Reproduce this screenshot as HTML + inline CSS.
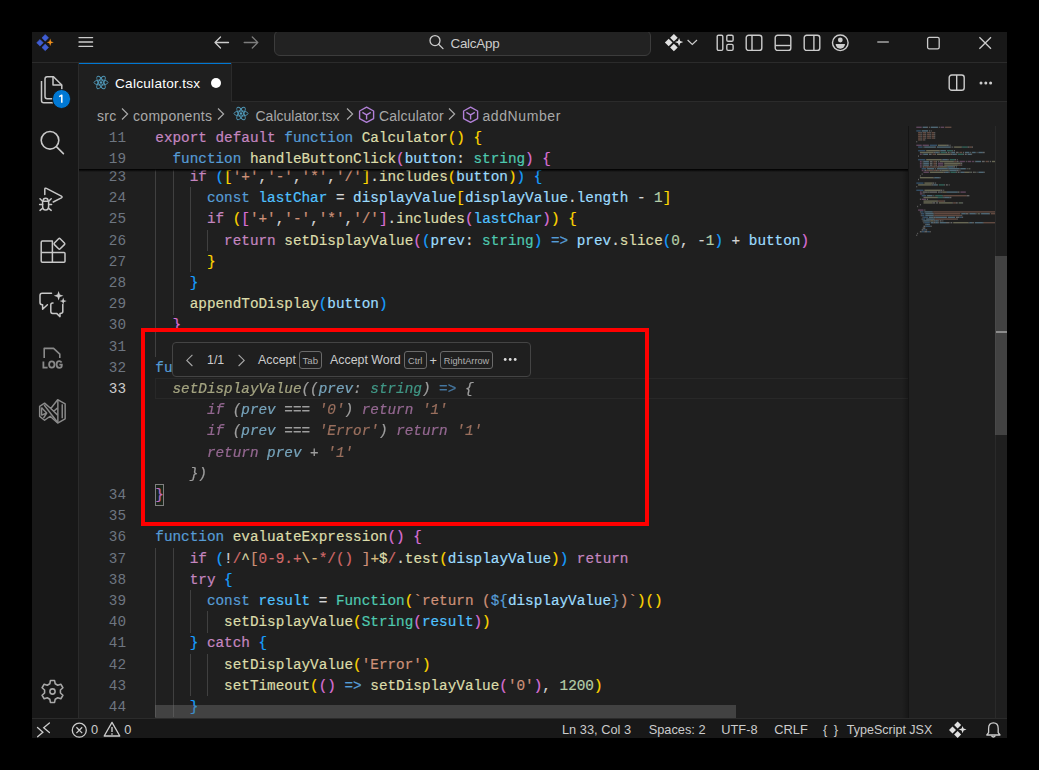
<!DOCTYPE html>
<html><head><meta charset="utf-8">
<style>
*{box-sizing:border-box;margin:0;padding:0}
html,body{width:1039px;height:770px;overflow:hidden;background:#000}
body{position:relative;font-family:"Liberation Sans",sans-serif;color:#cccccc}
.abs{position:absolute}
#title{position:absolute;left:32px;top:32px;width:975px;height:30px;background:#181818}
#titleb{position:absolute;left:32px;top:62px;width:975px;height:1px;background:#2b2b2b}
#act{position:absolute;left:32px;top:63px;width:46px;height:655px;background:#181818}
#actb{position:absolute;left:78px;top:63px;width:1px;height:655px;background:#2b2b2b}
#tabs{position:absolute;left:79px;top:63px;width:928px;height:38px;background:#181818}
#tabsb{position:absolute;left:79px;top:101px;width:928px;height:1px;background:#2b2b2b}
#tab{position:absolute;left:79px;top:63px;width:152px;height:39px;background:#1f1f1f;border-top:1px solid #0078d4}
#tabr{position:absolute;left:231px;top:63px;width:1px;height:38px;background:#2b2b2b}
#editor{position:absolute;left:79px;top:102px;width:928px;height:616px;background:#1f1f1f}
#status{position:absolute;left:32px;top:718px;width:975px;height:20px;background:#181818;border-top:1px solid #2b2b2b}
.ln{position:absolute;height:21.2px;line-height:21.2px;font-family:"Liberation Mono",monospace;font-size:14.33px;white-space:pre;-webkit-text-stroke:0.2px}
.ghost{font-style:italic;opacity:0.7}
.num{position:absolute;left:90px;width:36px;text-align:right;height:21.2px;line-height:21.2px;font-family:"Liberation Mono",monospace;font-size:14.33px;color:#6e7681;white-space:pre}
.num.act{color:#cccccc}
.guide{position:absolute;width:1px;height:21.2px;background:#404040}
.ui{position:absolute;white-space:pre;font-family:"Liberation Sans",sans-serif}
svg{position:absolute;overflow:visible}
</style></head><body>
<div id="title"></div>
<div id="titleb"></div>
<div id="act"></div>
<div id="actb"></div>
<div id="tabs"></div>
<div id="tabsb"></div>
<div id="editor"></div>
<div id="tab"></div>
<div id="tabr"></div>

<!-- title bar contents -->
<div class="abs" style="left:274px;top:32px;width:377px;height:25px;overflow:hidden"><div class="abs" style="left:0;top:-2.5px;width:377px;height:26.5px;border:1px solid #3c3c3c;border-radius:6px;background:#222222"></div></div>
<div class="ui" style="left:450.5px;top:34.8px;font-size:13.4px;line-height:17px;letter-spacing:-0.25px;color:#cccccc">CalcApp</div>

<!-- tab contents -->
<div class="ui" style="left:115px;top:74.7px;font-size:13.6px;line-height:17px;letter-spacing:0.27px;color:#ffffff">Calculator.tsx</div>
<div class="abs" style="left:210.5px;top:78px;width:10px;height:10px;border-radius:50%;background:#ffffff"></div>

<!-- breadcrumbs -->
<div class="ui" style="left:97px;top:108.1px;font-size:14px;line-height:17px;letter-spacing:0.3px;color:#a9a9a9">src</div>
<div class="ui" style="left:133px;top:108.1px;font-size:14px;line-height:17px;letter-spacing:0.3px;color:#a9a9a9">components</div>
<div class="ui" style="left:255.5px;top:108.1px;font-size:14px;line-height:17px;letter-spacing:0px;color:#a9a9a9">Calculator.tsx</div>
<div class="ui" style="left:379px;top:108.1px;font-size:14px;line-height:17px;letter-spacing:0.17px;color:#a9a9a9">Calculator</div>
<div class="ui" style="left:482.4px;top:108.1px;font-size:14px;line-height:17px;letter-spacing:0.6px;color:#a9a9a9">addNumber</div>

<!-- editor -->
<div class="guide" style="top:166.20px;left:155.30px"></div>
<div class="guide" style="top:166.20px;left:172.50px"></div>
<div class="guide" style="top:187.40px;left:155.30px"></div>
<div class="guide" style="top:187.40px;left:172.50px"></div>
<div class="guide" style="top:187.40px;left:189.70px"></div>
<div class="guide" style="top:208.60px;left:155.30px"></div>
<div class="guide" style="top:208.60px;left:172.50px"></div>
<div class="guide" style="top:208.60px;left:189.70px"></div>
<div class="guide" style="top:229.80px;left:155.30px"></div>
<div class="guide" style="top:229.80px;left:172.50px"></div>
<div class="guide" style="top:229.80px;left:189.70px"></div>
<div class="guide" style="top:229.80px;left:206.90px"></div>
<div class="guide" style="top:251.00px;left:155.30px"></div>
<div class="guide" style="top:251.00px;left:172.50px"></div>
<div class="guide" style="top:251.00px;left:189.70px"></div>
<div class="guide" style="top:272.20px;left:155.30px"></div>
<div class="guide" style="top:272.20px;left:172.50px"></div>
<div class="guide" style="top:293.40px;left:155.30px"></div>
<div class="guide" style="top:293.40px;left:172.50px"></div>
<div class="guide" style="top:314.60px;left:155.30px"></div>
<div class="guide" style="top:335.80px;left:155.30px"></div>
<div class="guide" style="top:547.80px;left:155.30px"></div>
<div class="guide" style="top:547.80px;left:172.50px"></div>
<div class="guide" style="top:569.00px;left:155.30px"></div>
<div class="guide" style="top:569.00px;left:172.50px"></div>
<div class="guide" style="top:590.20px;left:155.30px"></div>
<div class="guide" style="top:590.20px;left:172.50px"></div>
<div class="guide" style="top:590.20px;left:189.70px"></div>
<div class="guide" style="top:611.40px;left:155.30px"></div>
<div class="guide" style="top:611.40px;left:172.50px"></div>
<div class="guide" style="top:611.40px;left:189.70px"></div>
<div class="guide" style="top:611.40px;left:206.90px"></div>
<div class="guide" style="top:632.60px;left:155.30px"></div>
<div class="guide" style="top:632.60px;left:172.50px"></div>
<div class="guide" style="top:653.80px;left:155.30px"></div>
<div class="guide" style="top:653.80px;left:172.50px"></div>
<div class="guide" style="top:653.80px;left:189.70px"></div>
<div class="guide" style="top:653.80px;left:206.90px"></div>
<div class="guide" style="top:675.00px;left:155.30px"></div>
<div class="guide" style="top:675.00px;left:172.50px"></div>
<div class="guide" style="top:675.00px;left:189.70px"></div>
<div class="guide" style="top:675.00px;left:206.90px"></div>
<div class="guide" style="top:696.20px;left:155.30px"></div>
<div class="guide" style="top:696.20px;left:172.50px"></div>
<div class="num" style="top:166.90px">23</div>
<div class="num" style="top:188.10px">24</div>
<div class="num" style="top:209.30px">25</div>
<div class="num" style="top:230.50px">26</div>
<div class="num" style="top:251.70px">27</div>
<div class="num" style="top:272.90px">28</div>
<div class="num" style="top:294.10px">29</div>
<div class="num" style="top:315.30px">30</div>
<div class="num" style="top:336.50px">31</div>
<div class="num" style="top:357.70px">32</div>
<div class="num act" style="top:378.90px">33</div>
<div class="num" style="top:484.90px">34</div>
<div class="num" style="top:506.10px">35</div>
<div class="num" style="top:527.30px">36</div>
<div class="num" style="top:548.50px">37</div>
<div class="num" style="top:569.70px">38</div>
<div class="num" style="top:590.90px">39</div>
<div class="num" style="top:612.10px">40</div>
<div class="num" style="top:633.30px">41</div>
<div class="num" style="top:654.50px">42</div>
<div class="num" style="top:675.70px">43</div>
<div class="num" style="top:696.90px">44</div>
<div class="ln" style="top:166.90px;left:189.70px"><span style="color:#c586c0">if</span><span style="color:#d4d4d4"> </span><span style="color:#179fff">(</span><span style="color:#ffd700">[</span><span style="color:#ce9178">&#x27;+&#x27;</span><span style="color:#d4d4d4">,</span><span style="color:#ce9178">&#x27;-&#x27;</span><span style="color:#d4d4d4">,</span><span style="color:#ce9178">&#x27;*&#x27;</span><span style="color:#d4d4d4">,</span><span style="color:#ce9178">&#x27;/&#x27;</span><span style="color:#ffd700">]</span><span style="color:#d4d4d4">.</span><span style="color:#dcdcaa">includes</span><span style="color:#ffd700">(</span><span style="color:#9cdcfe">button</span><span style="color:#ffd700">)</span><span style="color:#179fff">)</span><span style="color:#d4d4d4"> </span><span style="color:#179fff">{</span></div>
<div class="ln" style="top:188.10px;left:206.90px"><span style="color:#569cd6">const</span><span style="color:#d4d4d4"> </span><span style="color:#4fc1ff">lastChar</span><span style="color:#d4d4d4"> = </span><span style="color:#9cdcfe">displayValue</span><span style="color:#ffd700">[</span><span style="color:#9cdcfe">displayValue</span><span style="color:#d4d4d4">.</span><span style="color:#9cdcfe">length</span><span style="color:#d4d4d4"> - </span><span style="color:#b5cea8">1</span><span style="color:#ffd700">]</span></div>
<div class="ln" style="top:209.30px;left:206.90px"><span style="color:#c586c0">if</span><span style="color:#d4d4d4"> </span><span style="color:#ffd700">(</span><span style="color:#da70d6">[</span><span style="color:#ce9178">&#x27;+&#x27;</span><span style="color:#d4d4d4">,</span><span style="color:#ce9178">&#x27;-&#x27;</span><span style="color:#d4d4d4">,</span><span style="color:#ce9178">&#x27;*&#x27;</span><span style="color:#d4d4d4">,</span><span style="color:#ce9178">&#x27;/&#x27;</span><span style="color:#da70d6">]</span><span style="color:#d4d4d4">.</span><span style="color:#dcdcaa">includes</span><span style="color:#da70d6">(</span><span style="color:#4fc1ff">lastChar</span><span style="color:#da70d6">)</span><span style="color:#ffd700">)</span><span style="color:#d4d4d4"> </span><span style="color:#ffd700">{</span></div>
<div class="ln" style="top:230.50px;left:224.10px"><span style="color:#c586c0">return</span><span style="color:#d4d4d4"> </span><span style="color:#dcdcaa">setDisplayValue</span><span style="color:#da70d6">(</span><span style="color:#179fff">(</span><span style="color:#9cdcfe">prev</span><span style="color:#d4d4d4">: </span><span style="color:#4ec9b0">string</span><span style="color:#179fff">)</span><span style="color:#d4d4d4"> </span><span style="color:#569cd6">=&gt;</span><span style="color:#d4d4d4"> </span><span style="color:#9cdcfe">prev</span><span style="color:#d4d4d4">.</span><span style="color:#dcdcaa">slice</span><span style="color:#179fff">(</span><span style="color:#b5cea8">0</span><span style="color:#d4d4d4">, </span><span style="color:#d4d4d4">-</span><span style="color:#b5cea8">1</span><span style="color:#179fff">)</span><span style="color:#d4d4d4"> + </span><span style="color:#9cdcfe">button</span><span style="color:#da70d6">)</span></div>
<div class="ln" style="top:251.70px;left:206.90px"><span style="color:#ffd700">}</span></div>
<div class="ln" style="top:272.90px;left:189.70px"><span style="color:#179fff">}</span></div>
<div class="ln" style="top:294.10px;left:189.70px"><span style="color:#dcdcaa">appendToDisplay</span><span style="color:#179fff">(</span><span style="color:#9cdcfe">button</span><span style="color:#179fff">)</span></div>
<div class="ln" style="top:315.30px;left:172.50px"><span style="color:#da70d6">}</span></div>
<div class="ln" style="top:357.70px;left:155.30px"><span style="color:#569cd6">function addNumber</span></div>
<div class="ln" style="top:484.90px;left:155.30px"><span style="color:#da70d6">}</span></div>
<div class="ln" style="top:527.30px;left:155.30px"><span style="color:#569cd6">function</span><span style="color:#d4d4d4"> </span><span style="color:#dcdcaa">evaluateExpression</span><span style="color:#da70d6">(</span><span style="color:#da70d6">)</span><span style="color:#d4d4d4"> </span><span style="color:#da70d6">{</span></div>
<div class="ln" style="top:548.50px;left:189.70px"><span style="color:#c586c0">if</span><span style="color:#d4d4d4"> </span><span style="color:#179fff">(</span><span style="color:#d4d4d4">!</span><span style="color:#d16969">/</span><span style="color:#dcdcaa">^</span><span style="color:#ce9178">[</span><span style="color:#d16969">0-9.+</span><span style="color:#d7ba7d">\-</span><span style="color:#d16969">*/()</span><span style="color:#d16969"> </span><span style="color:#ce9178">]</span><span style="color:#d7ba7d">+</span><span style="color:#dcdcaa">$</span><span style="color:#d16969">/</span><span style="color:#d4d4d4">.</span><span style="color:#dcdcaa">test</span><span style="color:#ffd700">(</span><span style="color:#9cdcfe">displayValue</span><span style="color:#ffd700">)</span><span style="color:#179fff">)</span><span style="color:#d4d4d4"> </span><span style="color:#c586c0">return</span></div>
<div class="ln" style="top:569.70px;left:189.70px"><span style="color:#c586c0">try</span><span style="color:#d4d4d4"> </span><span style="color:#179fff">{</span></div>
<div class="ln" style="top:590.90px;left:206.90px"><span style="color:#569cd6">const</span><span style="color:#d4d4d4"> </span><span style="color:#4fc1ff">result</span><span style="color:#d4d4d4"> = </span><span style="color:#4ec9b0">Function</span><span style="color:#ffd700">(</span><span style="color:#ce9178">`return (</span><span style="color:#569cd6">${</span><span style="color:#9cdcfe">displayValue</span><span style="color:#569cd6">}</span><span style="color:#ce9178">)`</span><span style="color:#ffd700">)</span><span style="color:#ffd700">(</span><span style="color:#ffd700">)</span></div>
<div class="ln" style="top:612.10px;left:224.10px"><span style="color:#dcdcaa">setDisplayValue</span><span style="color:#ffd700">(</span><span style="color:#4ec9b0">String</span><span style="color:#da70d6">(</span><span style="color:#4fc1ff">result</span><span style="color:#da70d6">)</span><span style="color:#ffd700">)</span></div>
<div class="ln" style="top:633.30px;left:189.70px"><span style="color:#179fff">}</span><span style="color:#d4d4d4"> </span><span style="color:#c586c0">catch</span><span style="color:#d4d4d4"> </span><span style="color:#179fff">{</span></div>
<div class="ln" style="top:654.50px;left:224.10px"><span style="color:#dcdcaa">setDisplayValue</span><span style="color:#ffd700">(</span><span style="color:#ce9178">&#x27;Error&#x27;</span><span style="color:#ffd700">)</span></div>
<div class="ln" style="top:675.70px;left:224.10px"><span style="color:#dcdcaa">setTimeout</span><span style="color:#ffd700">(</span><span style="color:#da70d6">(</span><span style="color:#da70d6">)</span><span style="color:#d4d4d4"> </span><span style="color:#569cd6">=&gt;</span><span style="color:#d4d4d4"> </span><span style="color:#dcdcaa">setDisplayValue</span><span style="color:#da70d6">(</span><span style="color:#ce9178">&#x27;0&#x27;</span><span style="color:#da70d6">)</span><span style="color:#d4d4d4">, </span><span style="color:#b5cea8">1200</span><span style="color:#ffd700">)</span></div>
<div class="ln" style="top:696.90px;left:189.70px"><span style="color:#179fff">}</span></div>
<div class="ln ghost" style="top:378.90px;left:172.50px"><span style="color:#dcdcaa">setDisplayValue</span><span style="color:#d4d4d4">((</span><span style="color:#9cdcfe">prev</span><span style="color:#d4d4d4">: </span><span style="color:#4ec9b0">string</span><span style="color:#d4d4d4">)</span><span style="color:#d4d4d4"> </span><span style="color:#569cd6">=&gt;</span><span style="color:#d4d4d4"> </span><span style="color:#d4d4d4">{</span></div>
<div class="ln ghost" style="top:400.10px;left:206.90px"><span style="color:#c586c0">if</span><span style="color:#d4d4d4"> (</span><span style="color:#9cdcfe">prev</span><span style="color:#d4d4d4"> === </span><span style="color:#ce9178">&#x27;0&#x27;</span><span style="color:#d4d4d4">)</span><span style="color:#d4d4d4"> </span><span style="color:#c586c0">return</span><span style="color:#d4d4d4"> </span><span style="color:#ce9178">&#x27;1&#x27;</span></div>
<div class="ln ghost" style="top:421.30px;left:206.90px"><span style="color:#c586c0">if</span><span style="color:#d4d4d4"> (</span><span style="color:#9cdcfe">prev</span><span style="color:#d4d4d4"> === </span><span style="color:#ce9178">&#x27;Error&#x27;</span><span style="color:#d4d4d4">)</span><span style="color:#d4d4d4"> </span><span style="color:#c586c0">return</span><span style="color:#d4d4d4"> </span><span style="color:#ce9178">&#x27;1&#x27;</span></div>
<div class="ln ghost" style="top:442.50px;left:206.90px"><span style="color:#c586c0">return</span><span style="color:#d4d4d4"> </span><span style="color:#9cdcfe">prev</span><span style="color:#d4d4d4"> + </span><span style="color:#ce9178">&#x27;1&#x27;</span></div>
<div class="ln ghost" style="top:463.70px;left:189.70px"><span style="color:#d4d4d4">})</span></div>


<!-- current line border (line 33) -->
<div class="abs" style="left:155px;top:378.20px;width:753px;height:21.2px;border:1px solid #282828;border-right:none"></div>
<!-- bracket match box line 34 -->
<div class="abs" style="left:155.2px;top:484.20px;width:8.9px;height:21.4px;border:1px solid #808080;background:rgba(0,100,0,0.1)"></div>
<svg style="left:900px;top:120px;opacity:0.38;filter:blur(0.3px)" width="100" height="130" viewBox="0 0 100 130"><rect x="16.30" y="6.60" width="5.40" height="1.4" fill="#c586c0"/><rect x="22.60" y="6.60" width="4.50" height="1.4" fill="#9cdcfe"/><rect x="27.10" y="6.60" width="0.90" height="1.4" fill="#d4d4d4"/><rect x="28.90" y="6.60" width="0.90" height="1.4" fill="#d4d4d4"/><rect x="30.70" y="6.60" width="7.20" height="1.4" fill="#9cdcfe"/><rect x="38.80" y="6.60" width="0.90" height="1.4" fill="#d4d4d4"/><rect x="40.60" y="6.60" width="3.60" height="1.4" fill="#c586c0"/><rect x="45.10" y="6.60" width="6.30" height="1.4" fill="#ce9178"/><rect x="16.30" y="10.20" width="4.50" height="1.4" fill="#569cd6"/><rect x="21.70" y="10.20" width="6.30" height="1.4" fill="#9cdcfe"/><rect x="28.90" y="10.20" width="0.90" height="1.4" fill="#d4d4d4"/><rect x="30.70" y="10.20" width="0.90" height="1.4" fill="#d4d4d4"/><rect x="18.10" y="12.00" width="2.70" height="1.4" fill="#ce9178"/><rect x="20.80" y="12.00" width="0.90" height="1.4" fill="#d4d4d4"/><rect x="22.60" y="12.00" width="2.70" height="1.4" fill="#ce9178"/><rect x="25.30" y="12.00" width="0.90" height="1.4" fill="#d4d4d4"/><rect x="27.10" y="12.00" width="2.70" height="1.4" fill="#ce9178"/><rect x="29.80" y="12.00" width="0.90" height="1.4" fill="#d4d4d4"/><rect x="31.60" y="12.00" width="2.70" height="1.4" fill="#ce9178"/><rect x="34.30" y="12.00" width="0.90" height="1.4" fill="#d4d4d4"/><rect x="18.10" y="13.80" width="2.70" height="1.4" fill="#ce9178"/><rect x="20.80" y="13.80" width="0.90" height="1.4" fill="#d4d4d4"/><rect x="22.60" y="13.80" width="2.70" height="1.4" fill="#ce9178"/><rect x="25.30" y="13.80" width="0.90" height="1.4" fill="#d4d4d4"/><rect x="27.10" y="13.80" width="2.70" height="1.4" fill="#ce9178"/><rect x="29.80" y="13.80" width="0.90" height="1.4" fill="#d4d4d4"/><rect x="31.60" y="13.80" width="2.70" height="1.4" fill="#ce9178"/><rect x="34.30" y="13.80" width="0.90" height="1.4" fill="#d4d4d4"/><rect x="18.10" y="15.60" width="2.70" height="1.4" fill="#ce9178"/><rect x="20.80" y="15.60" width="0.90" height="1.4" fill="#d4d4d4"/><rect x="22.60" y="15.60" width="2.70" height="1.4" fill="#ce9178"/><rect x="25.30" y="15.60" width="0.90" height="1.4" fill="#d4d4d4"/><rect x="27.10" y="15.60" width="2.70" height="1.4" fill="#ce9178"/><rect x="29.80" y="15.60" width="0.90" height="1.4" fill="#d4d4d4"/><rect x="31.60" y="15.60" width="2.70" height="1.4" fill="#ce9178"/><rect x="34.30" y="15.60" width="0.90" height="1.4" fill="#d4d4d4"/><rect x="18.10" y="17.40" width="2.70" height="1.4" fill="#ce9178"/><rect x="20.80" y="17.40" width="0.90" height="1.4" fill="#d4d4d4"/><rect x="22.60" y="17.40" width="2.70" height="1.4" fill="#ce9178"/><rect x="25.30" y="17.40" width="0.90" height="1.4" fill="#d4d4d4"/><rect x="27.10" y="17.40" width="2.70" height="1.4" fill="#ce9178"/><rect x="29.80" y="17.40" width="0.90" height="1.4" fill="#d4d4d4"/><rect x="31.60" y="17.40" width="2.70" height="1.4" fill="#ce9178"/><rect x="34.30" y="17.40" width="0.90" height="1.4" fill="#d4d4d4"/><rect x="18.10" y="19.20" width="2.70" height="1.4" fill="#ce9178"/><rect x="20.80" y="19.20" width="0.90" height="1.4" fill="#d4d4d4"/><rect x="22.60" y="19.20" width="1.80" height="1.4" fill="#ce9178"/><rect x="24.40" y="19.20" width="0.90" height="1.4" fill="#d4d4d4"/><rect x="16.30" y="21.00" width="0.90" height="1.4" fill="#d4d4d4"/><rect x="16.30" y="24.60" width="5.40" height="1.4" fill="#c586c0"/><rect x="22.60" y="24.60" width="6.30" height="1.4" fill="#c586c0"/><rect x="29.80" y="24.60" width="7.20" height="1.4" fill="#569cd6"/><rect x="37.90" y="24.60" width="9.00" height="1.4" fill="#dcdcaa"/><rect x="46.90" y="24.60" width="1.80" height="1.4" fill="#d4d4d4"/><rect x="49.60" y="24.60" width="0.90" height="1.4" fill="#d4d4d4"/><rect x="18.10" y="26.40" width="4.50" height="1.4" fill="#569cd6"/><rect x="23.50" y="26.40" width="0.90" height="1.4" fill="#d4d4d4"/><rect x="24.40" y="26.40" width="10.80" height="1.4" fill="#9cdcfe"/><rect x="35.20" y="26.40" width="0.90" height="1.4" fill="#d4d4d4"/><rect x="37.00" y="26.40" width="13.50" height="1.4" fill="#9cdcfe"/><rect x="50.50" y="26.40" width="0.90" height="1.4" fill="#d4d4d4"/><rect x="52.30" y="26.40" width="0.90" height="1.4" fill="#d4d4d4"/><rect x="54.10" y="26.40" width="7.20" height="1.4" fill="#dcdcaa"/><rect x="61.30" y="26.40" width="0.90" height="1.4" fill="#d4d4d4"/><rect x="62.20" y="26.40" width="5.40" height="1.4" fill="#4ec9b0"/><rect x="67.60" y="26.40" width="1.80" height="1.4" fill="#d4d4d4"/><rect x="69.40" y="26.40" width="2.70" height="1.4" fill="#ce9178"/><rect x="72.10" y="26.40" width="0.90" height="1.4" fill="#d4d4d4"/><rect x="18.10" y="30.00" width="7.20" height="1.4" fill="#569cd6"/><rect x="26.20" y="30.00" width="13.50" height="1.4" fill="#dcdcaa"/><rect x="39.70" y="30.00" width="0.90" height="1.4" fill="#d4d4d4"/><rect x="40.60" y="30.00" width="4.50" height="1.4" fill="#9cdcfe"/><rect x="45.10" y="30.00" width="0.90" height="1.4" fill="#d4d4d4"/><rect x="46.90" y="30.00" width="5.40" height="1.4" fill="#4ec9b0"/><rect x="52.30" y="30.00" width="0.90" height="1.4" fill="#d4d4d4"/><rect x="54.10" y="30.00" width="0.90" height="1.4" fill="#d4d4d4"/><rect x="19.90" y="31.80" width="13.50" height="1.4" fill="#dcdcaa"/><rect x="33.40" y="31.80" width="1.80" height="1.4" fill="#d4d4d4"/><rect x="35.20" y="31.80" width="3.60" height="1.4" fill="#9cdcfe"/><rect x="38.80" y="31.80" width="0.90" height="1.4" fill="#d4d4d4"/><rect x="40.60" y="31.80" width="5.40" height="1.4" fill="#4ec9b0"/><rect x="46.00" y="31.80" width="0.90" height="1.4" fill="#d4d4d4"/><rect x="47.80" y="31.80" width="1.80" height="1.4" fill="#d4d4d4"/><rect x="50.50" y="31.80" width="0.90" height="1.4" fill="#d4d4d4"/><rect x="51.40" y="31.80" width="3.60" height="1.4" fill="#9cdcfe"/><rect x="55.90" y="31.80" width="2.70" height="1.4" fill="#d4d4d4"/><rect x="59.50" y="31.80" width="2.70" height="1.4" fill="#ce9178"/><rect x="63.10" y="31.80" width="0.90" height="1.4" fill="#d4d4d4"/><rect x="64.90" y="31.80" width="4.50" height="1.4" fill="#9cdcfe"/><rect x="70.30" y="31.80" width="0.90" height="1.4" fill="#d4d4d4"/><rect x="72.10" y="31.80" width="3.60" height="1.4" fill="#9cdcfe"/><rect x="76.60" y="31.80" width="0.90" height="1.4" fill="#d4d4d4"/><rect x="78.40" y="31.80" width="4.50" height="1.4" fill="#9cdcfe"/><rect x="82.90" y="31.80" width="1.80" height="1.4" fill="#d4d4d4"/><rect x="19.90" y="33.60" width="1.80" height="1.4" fill="#c586c0"/><rect x="22.60" y="33.60" width="0.90" height="1.4" fill="#d4d4d4"/><rect x="23.50" y="33.60" width="4.50" height="1.4" fill="#9cdcfe"/><rect x="28.90" y="33.60" width="2.70" height="1.4" fill="#d4d4d4"/><rect x="32.50" y="33.60" width="2.70" height="1.4" fill="#ce9178"/><rect x="35.20" y="33.60" width="0.90" height="1.4" fill="#d4d4d4"/><rect x="37.00" y="33.60" width="13.50" height="1.4" fill="#dcdcaa"/><rect x="50.50" y="33.60" width="1.80" height="1.4" fill="#d4d4d4"/><rect x="52.30" y="33.60" width="3.60" height="1.4" fill="#9cdcfe"/><rect x="55.90" y="33.60" width="0.90" height="1.4" fill="#d4d4d4"/><rect x="57.70" y="33.60" width="5.40" height="1.4" fill="#4ec9b0"/><rect x="63.10" y="33.60" width="0.90" height="1.4" fill="#d4d4d4"/><rect x="64.90" y="33.60" width="1.80" height="1.4" fill="#d4d4d4"/><rect x="67.60" y="33.60" width="3.60" height="1.4" fill="#9cdcfe"/><rect x="71.20" y="33.60" width="0.90" height="1.4" fill="#d4d4d4"/><rect x="18.10" y="35.40" width="0.90" height="1.4" fill="#d4d4d4"/><rect x="18.10" y="39.00" width="7.20" height="1.4" fill="#569cd6"/><rect x="26.20" y="39.00" width="15.30" height="1.4" fill="#dcdcaa"/><rect x="41.50" y="39.00" width="0.90" height="1.4" fill="#d4d4d4"/><rect x="42.40" y="39.00" width="5.40" height="1.4" fill="#9cdcfe"/><rect x="47.80" y="39.00" width="0.90" height="1.4" fill="#d4d4d4"/><rect x="49.60" y="39.00" width="5.40" height="1.4" fill="#4ec9b0"/><rect x="55.00" y="39.00" width="0.90" height="1.4" fill="#d4d4d4"/><rect x="56.80" y="39.00" width="0.90" height="1.4" fill="#d4d4d4"/><rect x="19.90" y="40.80" width="1.80" height="1.4" fill="#c586c0"/><rect x="22.60" y="40.80" width="0.90" height="1.4" fill="#d4d4d4"/><rect x="23.50" y="40.80" width="5.40" height="1.4" fill="#9cdcfe"/><rect x="29.80" y="40.80" width="2.70" height="1.4" fill="#d4d4d4"/><rect x="33.40" y="40.80" width="2.70" height="1.4" fill="#ce9178"/><rect x="36.10" y="40.80" width="0.90" height="1.4" fill="#d4d4d4"/><rect x="37.90" y="40.80" width="0.90" height="1.4" fill="#d4d4d4"/><rect x="39.70" y="40.80" width="13.50" height="1.4" fill="#dcdcaa"/><rect x="53.20" y="40.80" width="0.90" height="1.4" fill="#d4d4d4"/><rect x="54.10" y="40.80" width="2.70" height="1.4" fill="#ce9178"/><rect x="56.80" y="40.80" width="1.80" height="1.4" fill="#d4d4d4"/><rect x="59.50" y="40.80" width="5.40" height="1.4" fill="#c586c0"/><rect x="65.80" y="40.80" width="0.90" height="1.4" fill="#d4d4d4"/><rect x="67.60" y="40.80" width="3.60" height="1.4" fill="#c586c0"/><rect x="72.10" y="40.80" width="1.80" height="1.4" fill="#c586c0"/><rect x="74.80" y="40.80" width="0.90" height="1.4" fill="#d4d4d4"/><rect x="75.70" y="40.80" width="5.40" height="1.4" fill="#9cdcfe"/><rect x="82.00" y="40.80" width="2.70" height="1.4" fill="#d4d4d4"/><rect x="85.60" y="40.80" width="2.70" height="1.4" fill="#ce9178"/><rect x="88.30" y="40.80" width="0.90" height="1.4" fill="#d4d4d4"/><rect x="90.10" y="40.80" width="0.90" height="1.4" fill="#d4d4d4"/><rect x="91.90" y="40.80" width="3.10" height="1.4" fill="#dcdcaa"/><rect x="19.90" y="42.60" width="1.80" height="1.4" fill="#c586c0"/><rect x="22.60" y="42.60" width="0.90" height="1.4" fill="#d4d4d4"/><rect x="23.50" y="42.60" width="5.40" height="1.4" fill="#9cdcfe"/><rect x="29.80" y="42.60" width="2.70" height="1.4" fill="#d4d4d4"/><rect x="33.40" y="42.60" width="2.70" height="1.4" fill="#ce9178"/><rect x="36.10" y="42.60" width="0.90" height="1.4" fill="#d4d4d4"/><rect x="37.90" y="42.60" width="5.40" height="1.4" fill="#c586c0"/><rect x="44.20" y="42.60" width="16.20" height="1.4" fill="#dcdcaa"/><rect x="60.40" y="42.60" width="1.80" height="1.4" fill="#d4d4d4"/><rect x="19.90" y="44.40" width="1.80" height="1.4" fill="#c586c0"/><rect x="22.60" y="44.40" width="0.90" height="1.4" fill="#d4d4d4"/><rect x="23.50" y="44.40" width="5.40" height="1.4" fill="#9cdcfe"/><rect x="29.80" y="44.40" width="2.70" height="1.4" fill="#d4d4d4"/><rect x="33.40" y="44.40" width="2.70" height="1.4" fill="#ce9178"/><rect x="36.10" y="44.40" width="0.90" height="1.4" fill="#d4d4d4"/><rect x="37.90" y="44.40" width="5.40" height="1.4" fill="#c586c0"/><rect x="44.20" y="44.40" width="13.50" height="1.4" fill="#dcdcaa"/><rect x="57.70" y="44.40" width="0.90" height="1.4" fill="#d4d4d4"/><rect x="58.60" y="44.40" width="2.70" height="1.4" fill="#ce9178"/><rect x="61.30" y="44.40" width="0.90" height="1.4" fill="#d4d4d4"/><rect x="19.90" y="46.20" width="1.80" height="1.4" fill="#c586c0"/><rect x="22.60" y="46.20" width="1.80" height="1.4" fill="#d4d4d4"/><rect x="24.40" y="46.20" width="2.70" height="1.4" fill="#ce9178"/><rect x="27.10" y="46.20" width="0.90" height="1.4" fill="#d4d4d4"/><rect x="28.00" y="46.20" width="2.70" height="1.4" fill="#ce9178"/><rect x="30.70" y="46.20" width="0.90" height="1.4" fill="#d4d4d4"/><rect x="31.60" y="46.20" width="2.70" height="1.4" fill="#ce9178"/><rect x="34.30" y="46.20" width="0.90" height="1.4" fill="#d4d4d4"/><rect x="35.20" y="46.20" width="2.70" height="1.4" fill="#ce9178"/><rect x="37.90" y="46.20" width="1.80" height="1.4" fill="#d4d4d4"/><rect x="39.70" y="46.20" width="7.20" height="1.4" fill="#dcdcaa"/><rect x="46.90" y="46.20" width="0.90" height="1.4" fill="#d4d4d4"/><rect x="47.80" y="46.20" width="5.40" height="1.4" fill="#9cdcfe"/><rect x="53.20" y="46.20" width="1.80" height="1.4" fill="#d4d4d4"/><rect x="55.90" y="46.20" width="0.90" height="1.4" fill="#d4d4d4"/><rect x="21.70" y="48.00" width="4.50" height="1.4" fill="#569cd6"/><rect x="27.10" y="48.00" width="7.20" height="1.4" fill="#9cdcfe"/><rect x="35.20" y="48.00" width="0.90" height="1.4" fill="#d4d4d4"/><rect x="37.00" y="48.00" width="10.80" height="1.4" fill="#9cdcfe"/><rect x="47.80" y="48.00" width="0.90" height="1.4" fill="#d4d4d4"/><rect x="48.70" y="48.00" width="10.80" height="1.4" fill="#9cdcfe"/><rect x="59.50" y="48.00" width="0.90" height="1.4" fill="#d4d4d4"/><rect x="60.40" y="48.00" width="5.40" height="1.4" fill="#9cdcfe"/><rect x="66.70" y="48.00" width="0.90" height="1.4" fill="#d4d4d4"/><rect x="68.50" y="48.00" width="0.90" height="1.4" fill="#b5cea8"/><rect x="69.40" y="48.00" width="0.90" height="1.4" fill="#d4d4d4"/><rect x="21.70" y="49.80" width="1.80" height="1.4" fill="#c586c0"/><rect x="24.40" y="49.80" width="1.80" height="1.4" fill="#d4d4d4"/><rect x="26.20" y="49.80" width="2.70" height="1.4" fill="#ce9178"/><rect x="28.90" y="49.80" width="0.90" height="1.4" fill="#d4d4d4"/><rect x="29.80" y="49.80" width="2.70" height="1.4" fill="#ce9178"/><rect x="32.50" y="49.80" width="0.90" height="1.4" fill="#d4d4d4"/><rect x="33.40" y="49.80" width="2.70" height="1.4" fill="#ce9178"/><rect x="36.10" y="49.80" width="0.90" height="1.4" fill="#d4d4d4"/><rect x="37.00" y="49.80" width="2.70" height="1.4" fill="#ce9178"/><rect x="39.70" y="49.80" width="1.80" height="1.4" fill="#d4d4d4"/><rect x="41.50" y="49.80" width="7.20" height="1.4" fill="#dcdcaa"/><rect x="48.70" y="49.80" width="0.90" height="1.4" fill="#d4d4d4"/><rect x="49.60" y="49.80" width="7.20" height="1.4" fill="#9cdcfe"/><rect x="56.80" y="49.80" width="1.80" height="1.4" fill="#d4d4d4"/><rect x="59.50" y="49.80" width="0.90" height="1.4" fill="#d4d4d4"/><rect x="23.50" y="51.60" width="5.40" height="1.4" fill="#c586c0"/><rect x="29.80" y="51.60" width="13.50" height="1.4" fill="#dcdcaa"/><rect x="43.30" y="51.60" width="1.80" height="1.4" fill="#d4d4d4"/><rect x="45.10" y="51.60" width="3.60" height="1.4" fill="#9cdcfe"/><rect x="48.70" y="51.60" width="0.90" height="1.4" fill="#d4d4d4"/><rect x="50.50" y="51.60" width="5.40" height="1.4" fill="#4ec9b0"/><rect x="55.90" y="51.60" width="0.90" height="1.4" fill="#d4d4d4"/><rect x="57.70" y="51.60" width="1.80" height="1.4" fill="#d4d4d4"/><rect x="60.40" y="51.60" width="3.60" height="1.4" fill="#9cdcfe"/><rect x="64.00" y="51.60" width="0.90" height="1.4" fill="#d4d4d4"/><rect x="64.90" y="51.60" width="4.50" height="1.4" fill="#dcdcaa"/><rect x="69.40" y="51.60" width="0.90" height="1.4" fill="#d4d4d4"/><rect x="70.30" y="51.60" width="0.90" height="1.4" fill="#b5cea8"/><rect x="71.20" y="51.60" width="0.90" height="1.4" fill="#d4d4d4"/><rect x="73.00" y="51.60" width="0.90" height="1.4" fill="#d4d4d4"/><rect x="73.90" y="51.60" width="0.90" height="1.4" fill="#b5cea8"/><rect x="74.80" y="51.60" width="0.90" height="1.4" fill="#d4d4d4"/><rect x="76.60" y="51.60" width="0.90" height="1.4" fill="#d4d4d4"/><rect x="78.40" y="51.60" width="5.40" height="1.4" fill="#9cdcfe"/><rect x="83.80" y="51.60" width="0.90" height="1.4" fill="#d4d4d4"/><rect x="21.70" y="53.40" width="0.90" height="1.4" fill="#d4d4d4"/><rect x="19.90" y="55.20" width="0.90" height="1.4" fill="#d4d4d4"/><rect x="19.90" y="57.00" width="13.50" height="1.4" fill="#dcdcaa"/><rect x="33.40" y="57.00" width="0.90" height="1.4" fill="#d4d4d4"/><rect x="34.30" y="57.00" width="5.40" height="1.4" fill="#9cdcfe"/><rect x="39.70" y="57.00" width="0.90" height="1.4" fill="#d4d4d4"/><rect x="18.10" y="58.80" width="0.90" height="1.4" fill="#d4d4d4"/><rect x="16.30" y="62.40" width="7.20" height="1.4" fill="#569cd6"/><rect x="24.40" y="62.40" width="8.10" height="1.4" fill="#dcdcaa"/><rect x="32.50" y="62.40" width="1.80" height="1.4" fill="#d4d4d4"/><rect x="35.20" y="62.40" width="0.90" height="1.4" fill="#d4d4d4"/><rect x="18.10" y="64.20" width="13.50" height="1.4" fill="#dcdcaa"/><rect x="31.60" y="64.20" width="1.80" height="1.4" fill="#d4d4d4"/><rect x="33.40" y="64.20" width="3.60" height="1.4" fill="#9cdcfe"/><rect x="37.00" y="64.20" width="0.90" height="1.4" fill="#d4d4d4"/><rect x="38.80" y="64.20" width="5.40" height="1.4" fill="#4ec9b0"/><rect x="44.20" y="64.20" width="0.90" height="1.4" fill="#d4d4d4"/><rect x="46.00" y="64.20" width="1.80" height="1.4" fill="#d4d4d4"/><rect x="48.70" y="64.20" width="0.90" height="1.4" fill="#d4d4d4"/><rect x="16.30" y="66.00" width="0.90" height="1.4" fill="#d4d4d4"/><rect x="16.30" y="69.60" width="7.20" height="1.4" fill="#569cd6"/><rect x="24.40" y="69.60" width="16.20" height="1.4" fill="#dcdcaa"/><rect x="40.60" y="69.60" width="1.80" height="1.4" fill="#d4d4d4"/><rect x="43.30" y="69.60" width="0.90" height="1.4" fill="#d4d4d4"/><rect x="19.90" y="71.40" width="1.80" height="1.4" fill="#c586c0"/><rect x="22.60" y="71.40" width="4.50" height="1.4" fill="#d4d4d4"/><rect x="27.10" y="71.40" width="0.90" height="1.4" fill="#b5cea8"/><rect x="28.00" y="71.40" width="0.90" height="1.4" fill="#d4d4d4"/><rect x="28.90" y="71.40" width="0.90" height="1.4" fill="#b5cea8"/><rect x="29.80" y="71.40" width="7.20" height="1.4" fill="#d4d4d4"/><rect x="37.90" y="71.40" width="1.80" height="1.4" fill="#d4d4d4"/><rect x="39.70" y="71.40" width="0.90" height="1.4" fill="#9cdcfe"/><rect x="40.60" y="71.40" width="1.80" height="1.4" fill="#d4d4d4"/><rect x="42.40" y="71.40" width="3.60" height="1.4" fill="#dcdcaa"/><rect x="46.00" y="71.40" width="0.90" height="1.4" fill="#d4d4d4"/><rect x="46.90" y="71.40" width="10.80" height="1.4" fill="#9cdcfe"/><rect x="57.70" y="71.40" width="1.80" height="1.4" fill="#d4d4d4"/><rect x="60.40" y="71.40" width="5.40" height="1.4" fill="#c586c0"/><rect x="19.90" y="73.20" width="2.70" height="1.4" fill="#c586c0"/><rect x="23.50" y="73.20" width="0.90" height="1.4" fill="#d4d4d4"/><rect x="21.70" y="75.00" width="4.50" height="1.4" fill="#569cd6"/><rect x="27.10" y="75.00" width="5.40" height="1.4" fill="#9cdcfe"/><rect x="33.40" y="75.00" width="0.90" height="1.4" fill="#d4d4d4"/><rect x="35.20" y="75.00" width="7.20" height="1.4" fill="#4ec9b0"/><rect x="42.40" y="75.00" width="0.90" height="1.4" fill="#d4d4d4"/><rect x="43.30" y="75.00" width="23.40" height="1.4" fill="#ce9178"/><rect x="66.70" y="75.00" width="2.70" height="1.4" fill="#d4d4d4"/><rect x="23.50" y="76.80" width="13.50" height="1.4" fill="#dcdcaa"/><rect x="37.00" y="76.80" width="0.90" height="1.4" fill="#d4d4d4"/><rect x="37.90" y="76.80" width="5.40" height="1.4" fill="#4ec9b0"/><rect x="43.30" y="76.80" width="0.90" height="1.4" fill="#d4d4d4"/><rect x="44.20" y="76.80" width="5.40" height="1.4" fill="#9cdcfe"/><rect x="49.60" y="76.80" width="1.80" height="1.4" fill="#d4d4d4"/><rect x="19.90" y="78.60" width="0.90" height="1.4" fill="#d4d4d4"/><rect x="21.70" y="78.60" width="4.50" height="1.4" fill="#c586c0"/><rect x="27.10" y="78.60" width="0.90" height="1.4" fill="#d4d4d4"/><rect x="23.50" y="80.40" width="13.50" height="1.4" fill="#dcdcaa"/><rect x="37.00" y="80.40" width="0.90" height="1.4" fill="#d4d4d4"/><rect x="37.90" y="80.40" width="6.30" height="1.4" fill="#ce9178"/><rect x="44.20" y="80.40" width="0.90" height="1.4" fill="#d4d4d4"/><rect x="23.50" y="82.20" width="9.00" height="1.4" fill="#dcdcaa"/><rect x="32.50" y="82.20" width="2.70" height="1.4" fill="#d4d4d4"/><rect x="36.10" y="82.20" width="1.80" height="1.4" fill="#d4d4d4"/><rect x="38.80" y="82.20" width="13.50" height="1.4" fill="#dcdcaa"/><rect x="52.30" y="82.20" width="0.90" height="1.4" fill="#d4d4d4"/><rect x="53.20" y="82.20" width="2.70" height="1.4" fill="#ce9178"/><rect x="55.90" y="82.20" width="1.80" height="1.4" fill="#d4d4d4"/><rect x="58.60" y="82.20" width="3.60" height="1.4" fill="#b5cea8"/><rect x="62.20" y="82.20" width="0.90" height="1.4" fill="#d4d4d4"/><rect x="19.90" y="84.00" width="0.90" height="1.4" fill="#d4d4d4"/><rect x="17.20" y="85.80" width="0.90" height="1.4" fill="#d4d4d4"/><rect x="18.10" y="89.40" width="5.40" height="1.4" fill="#c586c0"/><rect x="24.40" y="89.40" width="0.90" height="1.4" fill="#d4d4d4"/><rect x="19.90" y="91.20" width="0.90" height="1.4" fill="#d4d4d4"/><rect x="20.80" y="91.20" width="2.70" height="1.4" fill="#569cd6"/><rect x="24.40" y="91.20" width="8.10" height="1.4" fill="#9cdcfe"/><rect x="32.50" y="91.20" width="0.90" height="1.4" fill="#d4d4d4"/><rect x="33.40" y="91.20" width="61.60" height="1.4" fill="#ce9178"/><rect x="20.80" y="93.00" width="0.90" height="1.4" fill="#d4d4d4"/><rect x="21.70" y="93.00" width="2.70" height="1.4" fill="#569cd6"/><rect x="25.30" y="93.00" width="8.10" height="1.4" fill="#9cdcfe"/><rect x="33.40" y="93.00" width="0.90" height="1.4" fill="#d4d4d4"/><rect x="34.30" y="93.00" width="26.10" height="1.4" fill="#ce9178"/><rect x="61.30" y="93.00" width="4.50" height="1.4" fill="#9cdcfe"/><rect x="65.80" y="93.00" width="2.70" height="1.4" fill="#d4d4d4"/><rect x="69.40" y="93.00" width="6.30" height="1.4" fill="#9cdcfe"/><rect x="75.70" y="93.00" width="0.90" height="1.4" fill="#d4d4d4"/><rect x="77.50" y="93.00" width="1.80" height="1.4" fill="#b5cea8"/><rect x="79.30" y="93.00" width="0.90" height="1.4" fill="#d4d4d4"/><rect x="81.10" y="93.00" width="8.10" height="1.4" fill="#9cdcfe"/><rect x="89.20" y="93.00" width="0.90" height="1.4" fill="#d4d4d4"/><rect x="91.00" y="93.00" width="4.00" height="1.4" fill="#ce9178"/><rect x="20.80" y="94.80" width="0.90" height="1.4" fill="#d4d4d4"/><rect x="21.70" y="94.80" width="2.70" height="1.4" fill="#569cd6"/><rect x="25.30" y="94.80" width="8.10" height="1.4" fill="#9cdcfe"/><rect x="33.40" y="94.80" width="0.90" height="1.4" fill="#d4d4d4"/><rect x="34.30" y="94.80" width="27.00" height="1.4" fill="#ce9178"/><rect x="61.30" y="94.80" width="0.90" height="1.4" fill="#d4d4d4"/><rect x="22.60" y="96.60" width="0.90" height="1.4" fill="#d4d4d4"/><rect x="23.50" y="96.60" width="4.50" height="1.4" fill="#569cd6"/><rect x="28.90" y="96.60" width="4.50" height="1.4" fill="#9cdcfe"/><rect x="33.40" y="96.60" width="1.80" height="1.4" fill="#d4d4d4"/><rect x="35.20" y="96.60" width="10.80" height="1.4" fill="#9cdcfe"/><rect x="46.00" y="96.60" width="0.90" height="1.4" fill="#d4d4d4"/><rect x="47.80" y="96.60" width="7.20" height="1.4" fill="#9cdcfe"/><rect x="55.90" y="96.60" width="3.60" height="1.4" fill="#d4d4d4"/><rect x="59.50" y="96.60" width="2.70" height="1.4" fill="#569cd6"/><rect x="62.20" y="96.60" width="0.90" height="1.4" fill="#d4d4d4"/><rect x="21.70" y="98.40" width="0.90" height="1.4" fill="#d4d4d4"/><rect x="22.60" y="98.40" width="2.70" height="1.4" fill="#569cd6"/><rect x="26.20" y="98.40" width="8.10" height="1.4" fill="#9cdcfe"/><rect x="34.30" y="98.40" width="0.90" height="1.4" fill="#d4d4d4"/><rect x="35.20" y="98.40" width="21.60" height="1.4" fill="#ce9178"/><rect x="56.80" y="98.40" width="0.90" height="1.4" fill="#d4d4d4"/><rect x="22.60" y="100.20" width="0.90" height="1.4" fill="#d4d4d4"/><rect x="23.50" y="100.20" width="6.30" height="1.4" fill="#9cdcfe"/><rect x="29.80" y="100.20" width="0.90" height="1.4" fill="#d4d4d4"/><rect x="30.70" y="100.20" width="2.70" height="1.4" fill="#dcdcaa"/><rect x="33.40" y="100.20" width="1.80" height="1.4" fill="#d4d4d4"/><rect x="35.20" y="100.20" width="2.70" height="1.4" fill="#9cdcfe"/><rect x="37.90" y="100.20" width="0.90" height="1.4" fill="#d4d4d4"/><rect x="39.70" y="100.20" width="1.80" height="1.4" fill="#d4d4d4"/><rect x="42.40" y="100.20" width="0.90" height="1.4" fill="#d4d4d4"/><rect x="23.50" y="102.00" width="0.90" height="1.4" fill="#d4d4d4"/><rect x="24.40" y="102.00" width="5.40" height="1.4" fill="#569cd6"/><rect x="30.70" y="102.00" width="2.70" height="1.4" fill="#9cdcfe"/><rect x="33.40" y="102.00" width="1.80" height="1.4" fill="#d4d4d4"/><rect x="35.20" y="102.00" width="2.70" height="1.4" fill="#9cdcfe"/><rect x="37.90" y="102.00" width="0.90" height="1.4" fill="#d4d4d4"/><rect x="39.70" y="102.00" width="6.30" height="1.4" fill="#9cdcfe"/><rect x="46.00" y="102.00" width="3.60" height="1.4" fill="#d4d4d4"/><rect x="50.50" y="102.00" width="1.80" height="1.4" fill="#d4d4d4"/><rect x="53.20" y="102.00" width="15.30" height="1.4" fill="#dcdcaa"/><rect x="68.50" y="102.00" width="0.90" height="1.4" fill="#d4d4d4"/><rect x="69.40" y="102.00" width="2.70" height="1.4" fill="#9cdcfe"/><rect x="72.10" y="102.00" width="1.80" height="1.4" fill="#d4d4d4"/><rect x="74.80" y="102.00" width="8.10" height="1.4" fill="#9cdcfe"/><rect x="82.90" y="102.00" width="0.90" height="1.4" fill="#d4d4d4"/><rect x="83.80" y="102.00" width="11.20" height="1.4" fill="#ce9178"/><rect x="25.30" y="103.80" width="0.90" height="1.4" fill="#d4d4d4"/><rect x="26.20" y="103.80" width="2.70" height="1.4" fill="#9cdcfe"/><rect x="28.90" y="103.80" width="0.90" height="1.4" fill="#d4d4d4"/><rect x="23.50" y="105.60" width="1.80" height="1.4" fill="#d4d4d4"/><rect x="25.30" y="105.60" width="5.40" height="1.4" fill="#569cd6"/><rect x="30.70" y="105.60" width="0.90" height="1.4" fill="#d4d4d4"/><rect x="22.60" y="107.40" width="2.70" height="1.4" fill="#d4d4d4"/><rect x="21.70" y="109.20" width="1.80" height="1.4" fill="#d4d4d4"/><rect x="23.50" y="109.20" width="2.70" height="1.4" fill="#569cd6"/><rect x="26.20" y="109.20" width="0.90" height="1.4" fill="#d4d4d4"/><rect x="19.90" y="111.00" width="1.80" height="1.4" fill="#d4d4d4"/><rect x="21.70" y="111.00" width="2.70" height="1.4" fill="#569cd6"/><rect x="24.40" y="111.00" width="2.70" height="1.4" fill="#d4d4d4"/><rect x="27.10" y="111.00" width="2.70" height="1.4" fill="#569cd6"/><rect x="29.80" y="111.00" width="0.90" height="1.4" fill="#d4d4d4"/><rect x="17.20" y="112.80" width="0.90" height="1.4" fill="#d4d4d4"/><rect x="16.30" y="114.60" width="0.90" height="1.4" fill="#d4d4d4"/></svg>
<!-- minimap shadow -->
<div class="abs" style="left:902px;top:126px;width:6px;height:592px;background:linear-gradient(90deg,#00000000,#00000040)"></div>
<div class="abs" style="left:908px;top:126px;width:1px;height:592px;background:#141414"></div>
<!-- vertical scrollbar -->
<div class="abs" style="left:995px;top:126px;width:1px;height:592px;background:#2a2a2a"></div>
<div class="abs" style="left:995px;top:256px;width:12px;height:179px;background:rgba(121,121,121,0.4)"></div>
<div class="abs" style="left:996px;top:331.2px;width:11px;height:1.7px;background:#8c8c8c"></div>
<!-- horizontal scrollbar -->
<div class="abs" style="left:155px;top:704.5px;width:581px;height:13.5px;background:rgba(121,121,121,0.4)"></div>
<!-- inline suggest toolbar -->
<div class="abs" style="left:172px;top:342.3px;width:359px;height:35.2px;background:#1f1f1f;border:1px solid #444444;border-radius:4px"></div>
<svg style="left:184px;top:353px" width="11" height="15" viewBox="0 0 11 15"><path d="M8.4 1.8 L2.8 7.4 L8.4 13" stroke="#a8a8a8" stroke-width="1.1" fill="none"/></svg>
<div class="ui" style="left:207px;top:352.8px;font-size:12.4px;line-height:15px;color:#cccccc">1/1</div>
<svg style="left:236px;top:353px" width="11" height="15" viewBox="0 0 11 15"><path d="M2.6 1.8 L8.2 7.4 L2.6 13" stroke="#a8a8a8" stroke-width="1.1" fill="none"/></svg>
<div class="ui" style="left:258px;top:352.8px;font-size:12.4px;line-height:15px;color:#cccccc">Accept</div>
<div class="abs" style="left:299px;top:351px;width:22.5px;height:18px;border:1px solid #6a6a6a;border-radius:3px"></div>
<div class="ui" style="left:299px;top:355px;width:22.5px;text-align:center;font-size:9.6px;line-height:12px;color:#b0b0b0">Tab</div>
<div class="ui" style="left:330px;top:352.8px;font-size:12.4px;line-height:15px;color:#cccccc">Accept Word</div>
<div class="abs" style="left:404px;top:351px;width:22.5px;height:18px;border:1px solid #6a6a6a;border-radius:3px"></div>
<div class="ui" style="left:404px;top:355px;width:22.5px;text-align:center;font-size:9.2px;line-height:12px;color:#b0b0b0">Ctrl</div>
<div class="ui" style="left:429.5px;top:352.5px;font-size:12.8px;line-height:15px;color:#cccccc">+</div>
<div class="abs" style="left:440px;top:351px;width:53px;height:18px;border:1px solid #6a6a6a;border-radius:3px"></div>
<div class="ui" style="left:440px;top:355px;width:53px;text-align:center;font-size:9.2px;line-height:12px;color:#b0b0b0">RightArrow</div>
<svg style="left:503px;top:357px" width="15" height="5" viewBox="0 0 15 5"><g fill="#dddddd"><circle cx="2.2" cy="2.5" r="1.4"/><circle cx="7.2" cy="2.5" r="1.4"/><circle cx="12.2" cy="2.5" r="1.4"/></g></svg>

<!-- sticky scroll -->
<div class="abs" style="left:79px;top:126px;width:829px;height:43px;background:#1f1f1f"></div>
<div class="abs" style="left:79px;top:169px;width:829px;height:3px;background:linear-gradient(#000000 0%,#000000b0 40%,#00000000 100%)"></div>
<div class="num" style="top:127.70px">11</div>
<div class="ln" style="top:127.70px;left:155.30px"><span style="color:#c586c0">export</span><span style="color:#d4d4d4"> </span><span style="color:#c586c0">default</span><span style="color:#d4d4d4"> </span><span style="color:#569cd6">function</span><span style="color:#d4d4d4"> </span><span style="color:#dcdcaa">Calculator</span><span style="color:#ffd700">(</span><span style="color:#ffd700">)</span><span style="color:#d4d4d4"> </span><span style="color:#ffd700">{</span></div>
<div class="num" style="top:148.90px">19</div>
<div class="ln" style="top:148.90px;left:172.50px"><span style="color:#569cd6">function</span><span style="color:#d4d4d4"> </span><span style="color:#dcdcaa">handleButtonClick</span><span style="color:#da70d6">(</span><span style="color:#9cdcfe">button</span><span style="color:#d4d4d4">: </span><span style="color:#4ec9b0">string</span><span style="color:#da70d6">)</span><span style="color:#d4d4d4"> </span><span style="color:#da70d6">{</span></div>

<!-- status bar -->
<div id="status"></div>
<div class="ui" style="left:562px;top:722px;font-size:12.8px;line-height:15px;color:#cccccc">Ln 33, Col 3</div>
<div class="ui" style="left:648.7px;top:722px;font-size:12.8px;line-height:15px;color:#cccccc">Spaces: 2</div>
<div class="ui" style="left:721.3px;top:722px;font-size:12.8px;line-height:15px;color:#cccccc">UTF-8</div>
<div class="ui" style="left:774.3px;top:722px;font-size:12.8px;line-height:15px;color:#cccccc">CRLF</div>
<div class="ui" style="left:823px;top:722px;font-size:12.8px;line-height:15px;letter-spacing:1.5px;color:#cccccc">{ }</div>
<div class="ui" style="left:846.8px;top:722.6px;font-size:12.5px;line-height:15px;color:#cccccc">TypeScript JSX</div>


<!-- ===== title bar icons ===== -->
<svg style="left:34px;top:32px" width="24" height="24" viewBox="0 0 24 24">
 <g fill="#3f5dd2" stroke="#3f5dd2" stroke-width="0.6" stroke-linejoin="round">
  <path d="M11.25 2.55 L14.55 5.85 L11.25 9.15 L7.95 5.85 Z"/>
  <path d="M6.00 7.50 L9.30 10.80 L6.00 14.10 L2.70 10.80 Z"/>
  <path d="M11.25 12.10 L14.55 15.40 L11.25 18.70 L7.95 15.40 Z"/>
 </g>
 <path fill="#f0901c" d="M16.2 6.6 L17.1 9.4 L19.7 10.3 L17.1 11.2 L16.2 14 L15.3 11.2 L12.7 10.3 L15.3 9.4 Z"/>
</svg>
<svg style="left:78px;top:36px" width="16" height="12" viewBox="0 0 16 12">
 <g stroke="#cccccc" stroke-width="1.3" stroke-linecap="round"><path d="M1 1.6H14.6M1 6H14.6M1 10.4H14.6"/></g>
</svg>
<svg style="left:213px;top:35px" width="17" height="15" viewBox="0 0 17 15">
 <g stroke="#cccccc" stroke-width="1.3" fill="none" stroke-linecap="round" stroke-linejoin="round"><path d="M15.5 7.5H2M7.5 2 L2 7.5 L7.5 13"/></g>
</svg>
<svg style="left:243px;top:35px" width="17" height="15" viewBox="0 0 17 15">
 <g stroke="#7d7d7d" stroke-width="1.3" fill="none" stroke-linecap="round" stroke-linejoin="round"><path d="M1.2 7.5H14.8M9.3 2 L14.8 7.5 L9.3 13"/></g>
</svg>
<svg style="left:428px;top:34px" width="17" height="17" viewBox="0 0 17 17">
 <g stroke="#cccccc" stroke-width="1.3" fill="none" stroke-linecap="round"><circle cx="7" cy="6.6" r="5"/><path d="M10.6 10.3 L15 14.6"/></g>
</svg>
<svg style="left:660px;top:30px" width="40" height="24" viewBox="0 0 40 24">
 <g fill="#e0e0e0">
  <path d="M13.9 3.9 L17.7 7.7 L13.9 11.5 L10.1 7.7 Z"/>
  <path d="M8.7 8.7 L12.5 12.5 L8.7 16.3 L4.9 12.5 Z"/>
  <path d="M13.9 13.7 L17.7 17.5 L13.9 21.3 L10.1 17.5 Z"/>
  <path d="M19.1 7.9 L20.2 11 L23.3 12.1 L20.2 13.2 L19.1 16.3 L18 13.2 L14.9 12.1 L18 11 Z"/>
 </g>
 <path d="M27.6 10 L32.3 14.4 L37 10" stroke="#cccccc" stroke-width="1.2" fill="none"/>
</svg>
<svg style="left:715.5px;top:34px" width="19" height="18" viewBox="0 0 19 18">
 <g stroke="#cccccc" stroke-width="1.4" fill="none"><rect x="1.2" y="1.2" width="5.6" height="15.2" rx="1.3"/><rect x="10.8" y="1.2" width="6.3" height="6" rx="1.3"/><rect x="10.8" y="10.4" width="6.3" height="6" rx="1.3"/></g>
</svg>
<svg style="left:745px;top:34px" width="18" height="18" viewBox="0 0 18 18">
 <g stroke="#cccccc" stroke-width="1.4" fill="none"><rect x="1.2" y="1.2" width="15.6" height="15.2" rx="2.5"/><path d="M7 1.2V16.4"/></g>
</svg>
<svg style="left:774px;top:34px" width="18" height="18" viewBox="0 0 18 18">
 <g stroke="#cccccc" stroke-width="1.4" fill="none"><rect x="1.2" y="1.2" width="15.6" height="15.2" rx="2.5"/><path d="M1.2 11.5H16.8"/></g>
</svg>
<svg style="left:803px;top:34px" width="18" height="18" viewBox="0 0 18 18">
 <g stroke="#cccccc" stroke-width="1.4" fill="none"><rect x="1.2" y="1.2" width="15.6" height="15.2" rx="2.5"/><path d="M10.9 1.2V16.4"/></g>
</svg>
<svg style="left:831px;top:34px" width="19" height="18" viewBox="0 0 19 18">
 <g stroke="#cccccc" stroke-width="1.4" fill="none"><circle cx="9.3" cy="8.8" r="7.8"/></g>
 <circle cx="9.3" cy="6" r="2.4" fill="#cccccc"/>
 <path d="M4.6 10 H14 A4.7 4.7 0 0 1 4.6 10 Z" fill="#cccccc"/>
</svg>
<svg style="left:876px;top:36px" width="14" height="12" viewBox="0 0 14 12">
 <path d="M1.3 6H12.8" stroke="#cccccc" stroke-width="1.2"/>
</svg>
<svg style="left:926px;top:36px" width="15" height="14" viewBox="0 0 15 14">
 <rect x="1.6" y="1.4" width="11.6" height="11.4" rx="1.6" stroke="#cccccc" stroke-width="1.3" fill="none"/>
</svg>
<svg style="left:978px;top:36px" width="15" height="14" viewBox="0 0 15 14">
 <path d="M1.4 1.2 L13 12.8 M13 1.2 L1.4 12.8" stroke="#cccccc" stroke-width="1.3"/>
</svg>

<!-- ===== activity bar icons ===== -->
<svg style="left:38px;top:74px" width="30" height="32" viewBox="0 0 30 32">
 <g stroke="#c8c8c8" stroke-width="1.5" fill="none" stroke-linejoin="round">
  <path d="M3.5 7 V26.5 Q3.5 28.8 5.8 28.8 H15"/>
  <path d="M7 5 Q7 2.8 9.2 2.8 H15.5 L23.8 11 V22.6 Q23.8 24.8 21.6 24.8 H9.2 Q7 24.8 7 22.6 Z" fill="#181818"/>
  <path d="M15 2.8 V11.1 H23.8"/>
 </g>
</svg>
<div class="abs" style="left:51.5px;top:89.1px;width:19.8px;height:19.8px;border-radius:50%;background:#0078d4;border:1px solid #181818"></div>
<svg style="left:56px;top:93px" width="10" height="12" viewBox="0 0 10 12"><path d="M3.2 3.6 L5.8 2.2 V9.8" stroke="#ffffff" stroke-width="1.5" fill="none" stroke-linejoin="round"/></svg>

<svg style="left:40px;top:130px" width="26" height="26" viewBox="0 0 26 26">
 <g stroke="#c8c8c8" stroke-width="1.6" fill="none" stroke-linecap="round"><circle cx="10" cy="10.3" r="8.8"/><path d="M16.4 16.6 L23.4 23.6"/></g>
</svg>

<svg style="left:39px;top:186px" width="28" height="28" viewBox="0 0 28 28">
 <g stroke="#c8c8c8" stroke-width="1.5" fill="none" stroke-linecap="round" stroke-linejoin="round">
  <path d="M5.8 8.6 V3.4 Q5.8 1.6 7.4 2.4 L22.4 10.2 Q23.8 11 22.4 11.8 L14.2 16"/>
  <path d="M4.2 14.6 Q4.2 12.2 6.6 12.2 Q9 12.2 9 14.6"/>
  <path d="M3.6 15.2 H9.6 V20.2 Q9.6 24 6.6 24 Q3.6 24 3.6 20.2 Z"/>
  <path d="M1 12.8 L3.6 15.2 M12.2 12.8 L9.6 15.2 M0.6 18.6 H3.6 M12.6 18.6 H9.6 M1 24.4 L3.8 22.2 M12.2 24.4 L9.4 22.2"/>
 </g>
</svg>

<svg style="left:36px;top:232px" width="34" height="34" viewBox="0 0 34 34">
 <g stroke="#c8c8c8" stroke-width="1.5" fill="none" stroke-linejoin="round">
  <path d="M5.2 10.2 Q5.2 9 6.4 9 H16.4 V20.5 H28 Q29 20.5 29 21.6 V29.2 Q29 30.2 28 30.2 H6.4 Q5.2 30.2 5.2 29 Z"/>
  <path d="M5.2 20.5 H16.4 V30.2"/>
  <path d="M18.4 11 L22.6 6.8 Q23.4 6 24.2 6.8 L28.4 11 Q29.2 11.8 28.4 12.6 L24.2 16.8 Q23.4 17.6 22.6 16.8 L18.4 12.6 Q17.6 11.8 18.4 11 Z"/>
 </g>
</svg>

<svg style="left:38px;top:290px" width="30" height="30" viewBox="0 0 30 30">
 <g stroke="#c8c8c8" stroke-width="1.5" fill="none" stroke-linejoin="round" stroke-linecap="round">
  <path d="M13.5 3.2 H4.2 Q2 3.2 2 5.4 V12.6 Q2 14.8 4.2 14.8 H4.6 V19.2 L9.4 14.8"/>
  <path d="M15 13 H14.6 Q12.8 13 12.8 14.8 V21.6 Q12.8 23.4 14.6 23.4 H18.6 L22 26.6 V23.4 Q24.8 23.4 24.8 21.4 V14.6"/>
 </g>
 <path fill="#c8c8c8" d="M20.6 1 L21.8 4.6 L25.4 5.8 L21.8 7 L20.6 10.6 L19.4 7 L15.8 5.8 L19.4 4.6 Z"/>
 <path fill="#c8c8c8" d="M25.2 7.6 L26.1 10.2 L28.7 11.1 L26.1 12 L25.2 14.6 L24.3 12 L21.7 11.1 L24.3 10.2 Z"/>
</svg>

<svg style="left:42px;top:346px" width="22" height="24" viewBox="0 0 22 24">
 <path d="M2.2 12 V2.4 H11.6 L17.8 8.2 V12" stroke="#8a8a8a" stroke-width="1.6" fill="none" stroke-linejoin="round"/>
 <path d="M1.4 15.4 V21.6 H5.6" stroke="#8a8a8a" stroke-width="1.8" fill="none"/>
 <ellipse cx="9.8" cy="18.5" rx="2.7" ry="3.1" stroke="#8a8a8a" stroke-width="1.8" fill="none"/>
 <path d="M19.6 16.4 Q18.8 15.2 17.3 15.2 Q14.6 15.2 14.6 18.5 Q14.6 21.8 17.3 21.8 Q19.8 21.8 19.8 19.4 V18.6 H17.4" stroke="#8a8a8a" stroke-width="1.8" fill="none"/>
</svg>

<svg style="left:36px;top:395px" width="34" height="33" viewBox="0 0 793 770">
 <g stroke="#8a8a8a" stroke-width="34" fill="none" stroke-linejoin="round">
  <path d="M85,265 L200,190 L345,315 L505,110 L680,205 L680,555 L505,655 L330,495 L200,590 L85,500 Z"/>
  <path d="M510,115 V650 M612,215 V545 M130,290 V480"/>
  <path d="M190,235 L505,640"/>
  <path d="M345,315 L505,470 M130,300 L250,420 L130,470 M250,420 L175,540 M505,300 L400,390"/>
 </g>
</svg>

<svg style="left:40px;top:679px" width="25" height="25" viewBox="0 0 24 24">
 <g stroke="#a8a8a8" stroke-width="1.5" fill="none" stroke-linejoin="round">
  <path d="M10 1.5 H14 L14.6 4.6 L17 6 L20 5 L22 8.4 L19.6 10.6 V13.4 L22 15.6 L20 19 L17 18 L14.6 19.4 L14 22.5 H10 L9.4 19.4 L7 18 L4 19 L2 15.6 L4.4 13.4 V10.6 L2 8.4 L4 5 L7 6 L9.4 4.6 Z"/>
  <circle cx="12" cy="12" r="2.5"/>
 </g>
</svg>

<!-- ===== tab icons ===== -->
<svg style="left:93px;top:75px" width="16" height="15" viewBox="0 0 16 15">
 <g stroke="#519aba" stroke-width="0.9" fill="none">
  <ellipse cx="8" cy="7.5" rx="7" ry="2.5"/>
  <ellipse cx="8" cy="7.5" rx="7" ry="2.5" transform="rotate(60 8 7.5)"/>
  <ellipse cx="8" cy="7.5" rx="7" ry="2.5" transform="rotate(-60 8 7.5)"/>
 </g>
 <circle cx="8" cy="7.5" r="1.2" fill="#519aba"/>
</svg>
<svg style="left:948px;top:74px" width="18" height="18" viewBox="0 0 18 18">
 <g stroke="#cccccc" stroke-width="1.4" fill="none"><rect x="1.2" y="1" width="15" height="15.3" rx="2.6"/><path d="M8.7 1V16.3"/></g>
</svg>
<svg style="left:979px;top:81px" width="14" height="4" viewBox="0 0 14 4">
 <g fill="#cccccc"><circle cx="2" cy="2" r="1.5"/><circle cx="6.8" cy="2" r="1.5"/><circle cx="11.6" cy="2" r="1.5"/></g>
</svg>

<!-- ===== breadcrumbs icons ===== -->
<svg style="left:120px;top:107px" width="10" height="14" viewBox="0 0 10 14">
 <path d="M2 1.5 L7.6 7 L2 12.5" stroke="#a9a9a9" stroke-width="1.2" fill="none"/>
</svg>
<svg style="left:216px;top:107px" width="10" height="14" viewBox="0 0 10 14">
 <path d="M2 1.5 L7.6 7 L2 12.5" stroke="#a9a9a9" stroke-width="1.2" fill="none"/>
</svg>
<svg style="left:345px;top:107px" width="10" height="14" viewBox="0 0 10 14">
 <path d="M2 1.5 L7.6 7 L2 12.5" stroke="#a9a9a9" stroke-width="1.2" fill="none"/>
</svg>
<svg style="left:447px;top:107px" width="10" height="14" viewBox="0 0 10 14">
 <path d="M2 1.5 L7.6 7 L2 12.5" stroke="#a9a9a9" stroke-width="1.2" fill="none"/>
</svg>
<svg style="left:233px;top:106px" width="16" height="15" viewBox="0 0 16 15">
 <g stroke="#519aba" stroke-width="0.9" fill="none">
  <ellipse cx="8" cy="7.5" rx="7" ry="2.5"/>
  <ellipse cx="8" cy="7.5" rx="7" ry="2.5" transform="rotate(60 8 7.5)"/>
  <ellipse cx="8" cy="7.5" rx="7" ry="2.5" transform="rotate(-60 8 7.5)"/>
 </g>
 <circle cx="8" cy="7.5" r="1.2" fill="#519aba"/>
</svg>
<svg style="left:358px;top:106px" width="18" height="18" viewBox="0 0 18 18">
 <g stroke="#b180d7" stroke-width="1.4" fill="none" stroke-linejoin="round">
  <path d="M8.6 1.2 L15.6 5 V12.6 L8.6 16.4 L1.6 12.6 V5 Z"/>
  <path d="M4.4 6.4 L8.6 8.8 L12.8 6.4 M8.6 8.8 V13.6"/>
 </g>
</svg>
<svg style="left:461.5px;top:106px" width="18" height="18" viewBox="0 0 18 18">
 <g stroke="#b180d7" stroke-width="1.4" fill="none" stroke-linejoin="round">
  <path d="M8.6 1.2 L15.6 5 V12.6 L8.6 16.4 L1.6 12.6 V5 Z"/>
  <path d="M4.4 6.4 L8.6 8.8 L12.8 6.4 M8.6 8.8 V13.6"/>
 </g>
</svg>

<!-- ===== status bar icons ===== -->
<svg style="left:32px;top:718px" width="24" height="20" viewBox="0 0 24 20">
 <g stroke="#cccccc" stroke-width="1.3" fill="none" stroke-linecap="round"><path d="M5.5 9.4 L10.9 14.2 L5.6 18.7 M17.4 4.9 L11.7 9.7 L17.4 14.5"/></g>
</svg>
<svg style="left:71px;top:721.5px" width="17" height="17" viewBox="0 0 17 17">
 <g stroke="#cccccc" stroke-width="1.3" fill="none"><circle cx="8.3" cy="8.2" r="7"/><path d="M5.4 5.3 L11.2 11.1 M11.2 5.3 L5.4 11.1"/></g>
</svg>
<div class="ui" style="left:91px;top:722px;font-size:12.8px;line-height:15px;color:#cccccc">0</div>
<svg style="left:103px;top:721px" width="18" height="17" viewBox="0 0 18 17">
 <g stroke="#cccccc" stroke-width="1.3" fill="none" stroke-linejoin="round"><path d="M9 1.4 L16.8 15 H1.2 Z"/></g>
 <path d="M9 6 V11 M9 12.3 V13.7" stroke="#cccccc" stroke-width="1.4"/>
</svg>
<div class="ui" style="left:124.3px;top:722px;font-size:12.8px;line-height:15px;color:#cccccc">0</div>
<svg style="left:944px;top:718px" width="28" height="20" viewBox="0 0 28 20">
 <g fill="#e0e0e0">
  <path d="M13.6 3.6 L17.1 7.1 L13.6 10.6 L10.1 7.1 Z"/>
  <path d="M8.5 8.5 L12 12 L8.5 15.5 L5 12 Z"/>
  <path d="M13.6 12.9 L17.1 16.4 L13.6 19.9 L10.1 16.4 Z"/>
  <path d="M18.6 8 L19.6 10.6 L22.5 11.6 L19.6 12.6 L18.6 15.2 L17.6 12.6 L14.7 11.6 L17.6 10.6 Z"/>
 </g>
</svg>
<svg style="left:985px;top:721px" width="17" height="18" viewBox="0 0 17 18">
 <g stroke="#cccccc" stroke-width="1.3" fill="none" stroke-linejoin="round"><path d="M8.4 1.8 Q13.2 1.8 13.2 7.4 V11.6 L15 14 H1.8 L3.6 11.6 V7.4 Q3.6 1.8 8.4 1.8 Z"/><path d="M6.4 14.6 Q8.4 17.4 10.4 14.6"/></g>
</svg>

<!-- red box -->
<div class="abs" style="left:141px;top:328px;width:508px;height:198px;border:4px solid #ff0000"></div>
</body></html>
